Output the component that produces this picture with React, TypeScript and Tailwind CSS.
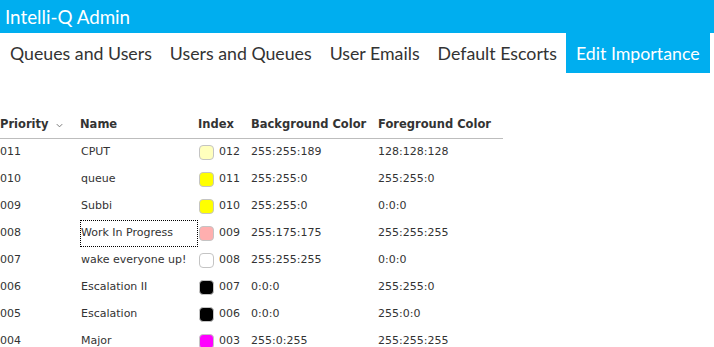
import React from 'react';

const tabs = ['Queues and Users', 'Users and Queues', 'User Emails', 'Default Escorts', 'Edit Importance'];

const rows = [
  { p: '011', name: 'CPUT', swatch: '#ffffbd', idx: '012', bg: '255:255:189', fg: '128:128:128' },
  { p: '010', name: 'queue', swatch: '#ffff00', idx: '011', bg: '255:255:0', fg: '255:255:0' },
  { p: '009', name: 'Subbi', swatch: '#ffff00', idx: '010', bg: '255:255:0', fg: '0:0:0' },
  { p: '008', name: 'Work In Progress', swatch: '#ffafaf', idx: '009', bg: '255:175:175', fg: '255:255:255', focus: true },
  { p: '007', name: 'wake everyone up!', swatch: '#ffffff', idx: '008', bg: '255:255:255', fg: '0:0:0' },
  { p: '006', name: 'Escalation II', swatch: '#000000', idx: '007', bg: '0:0:0', fg: '255:255:0' },
  { p: '005', name: 'Escalation', swatch: '#000000', idx: '006', bg: '0:0:0', fg: '255:0:0' },
  { p: '004', name: 'Major', swatch: '#ff00ff', idx: '003', bg: '255:0:255', fg: '255:255:255' },
];

const App = () => {
  return (
    <div className="w-[714px] h-[347px] overflow-hidden bg-white">
      {/* Title bar */}
      <div className="h-[33px] bg-[#00aeef] flex items-center px-[5px] pt-[1px]">
        <span className="text-white text-[18.8px] whitespace-nowrap font-['Lato',sans-serif]">Intelli-Q Admin</span>
      </div>

      {/* Tabs */}
      <div className="flex h-[40px] pl-[1px] whitespace-nowrap font-['Lato',sans-serif] text-[17.75px] text-[#333]">
        {tabs.map((t, i) => (
          <div
            key={t}
            className={
              i === tabs.length - 1
                ? 'flex shrink-0 items-center px-[10px] bg-[#00aeef] text-white'
                : 'flex shrink-0 items-center px-[9px]'
            }
          >
            {t}
          </div>
        ))}
      </div>

      {/* Table */}
      <div className="mt-[39px] w-[503px] font-['DejaVu_Sans',sans-serif] text-[11px] text-[#333]">
        <div className="flex h-[27px] items-center border-b border-[#bdbdbd] font-bold text-[11.5px]">
          <div className="w-[80px] flex items-center">
            Priority
            <svg width="9" height="9" viewBox="0 0 10 10" className="ml-[6px] mt-[1px]">
              <path d="M2 3.5 L5 6.5 L8 3.5" fill="none" stroke="#777" strokeWidth="1.1" />
            </svg>
          </div>
          <div className="w-[118px]">Name</div>
          <div className="w-[53px]">Index</div>
          <div className="w-[127px]">Background Color</div>
          <div className="flex-1">Foreground Color</div>
        </div>
        {rows.map((r) => (
          <div key={r.p} className="flex h-[27px] items-center">
            <div className="w-[80px]">{r.p}</div>
            <div
              className={
                r.focus
                  ? 'w-[118px] h-full flex items-center pl-[1px] outline outline-1 outline-dotted outline-black -outline-offset-1'
                  : 'w-[118px] pl-[1px]'
              }
            >
              {r.name}
            </div>
            <div className="w-[53px] flex items-center">
              <span
                className="w-[15px] h-[15px] rounded-[4px] border border-[#c4c4c4] ml-[1px] mr-[5px]"
                style={{ backgroundColor: r.swatch }}
              />
              {r.idx}
            </div>
            <div className="w-[127px]">{r.bg}</div>
            <div className="flex-1">{r.fg}</div>
          </div>
        ))}
      </div>
    </div>
  );
};

export default App;
